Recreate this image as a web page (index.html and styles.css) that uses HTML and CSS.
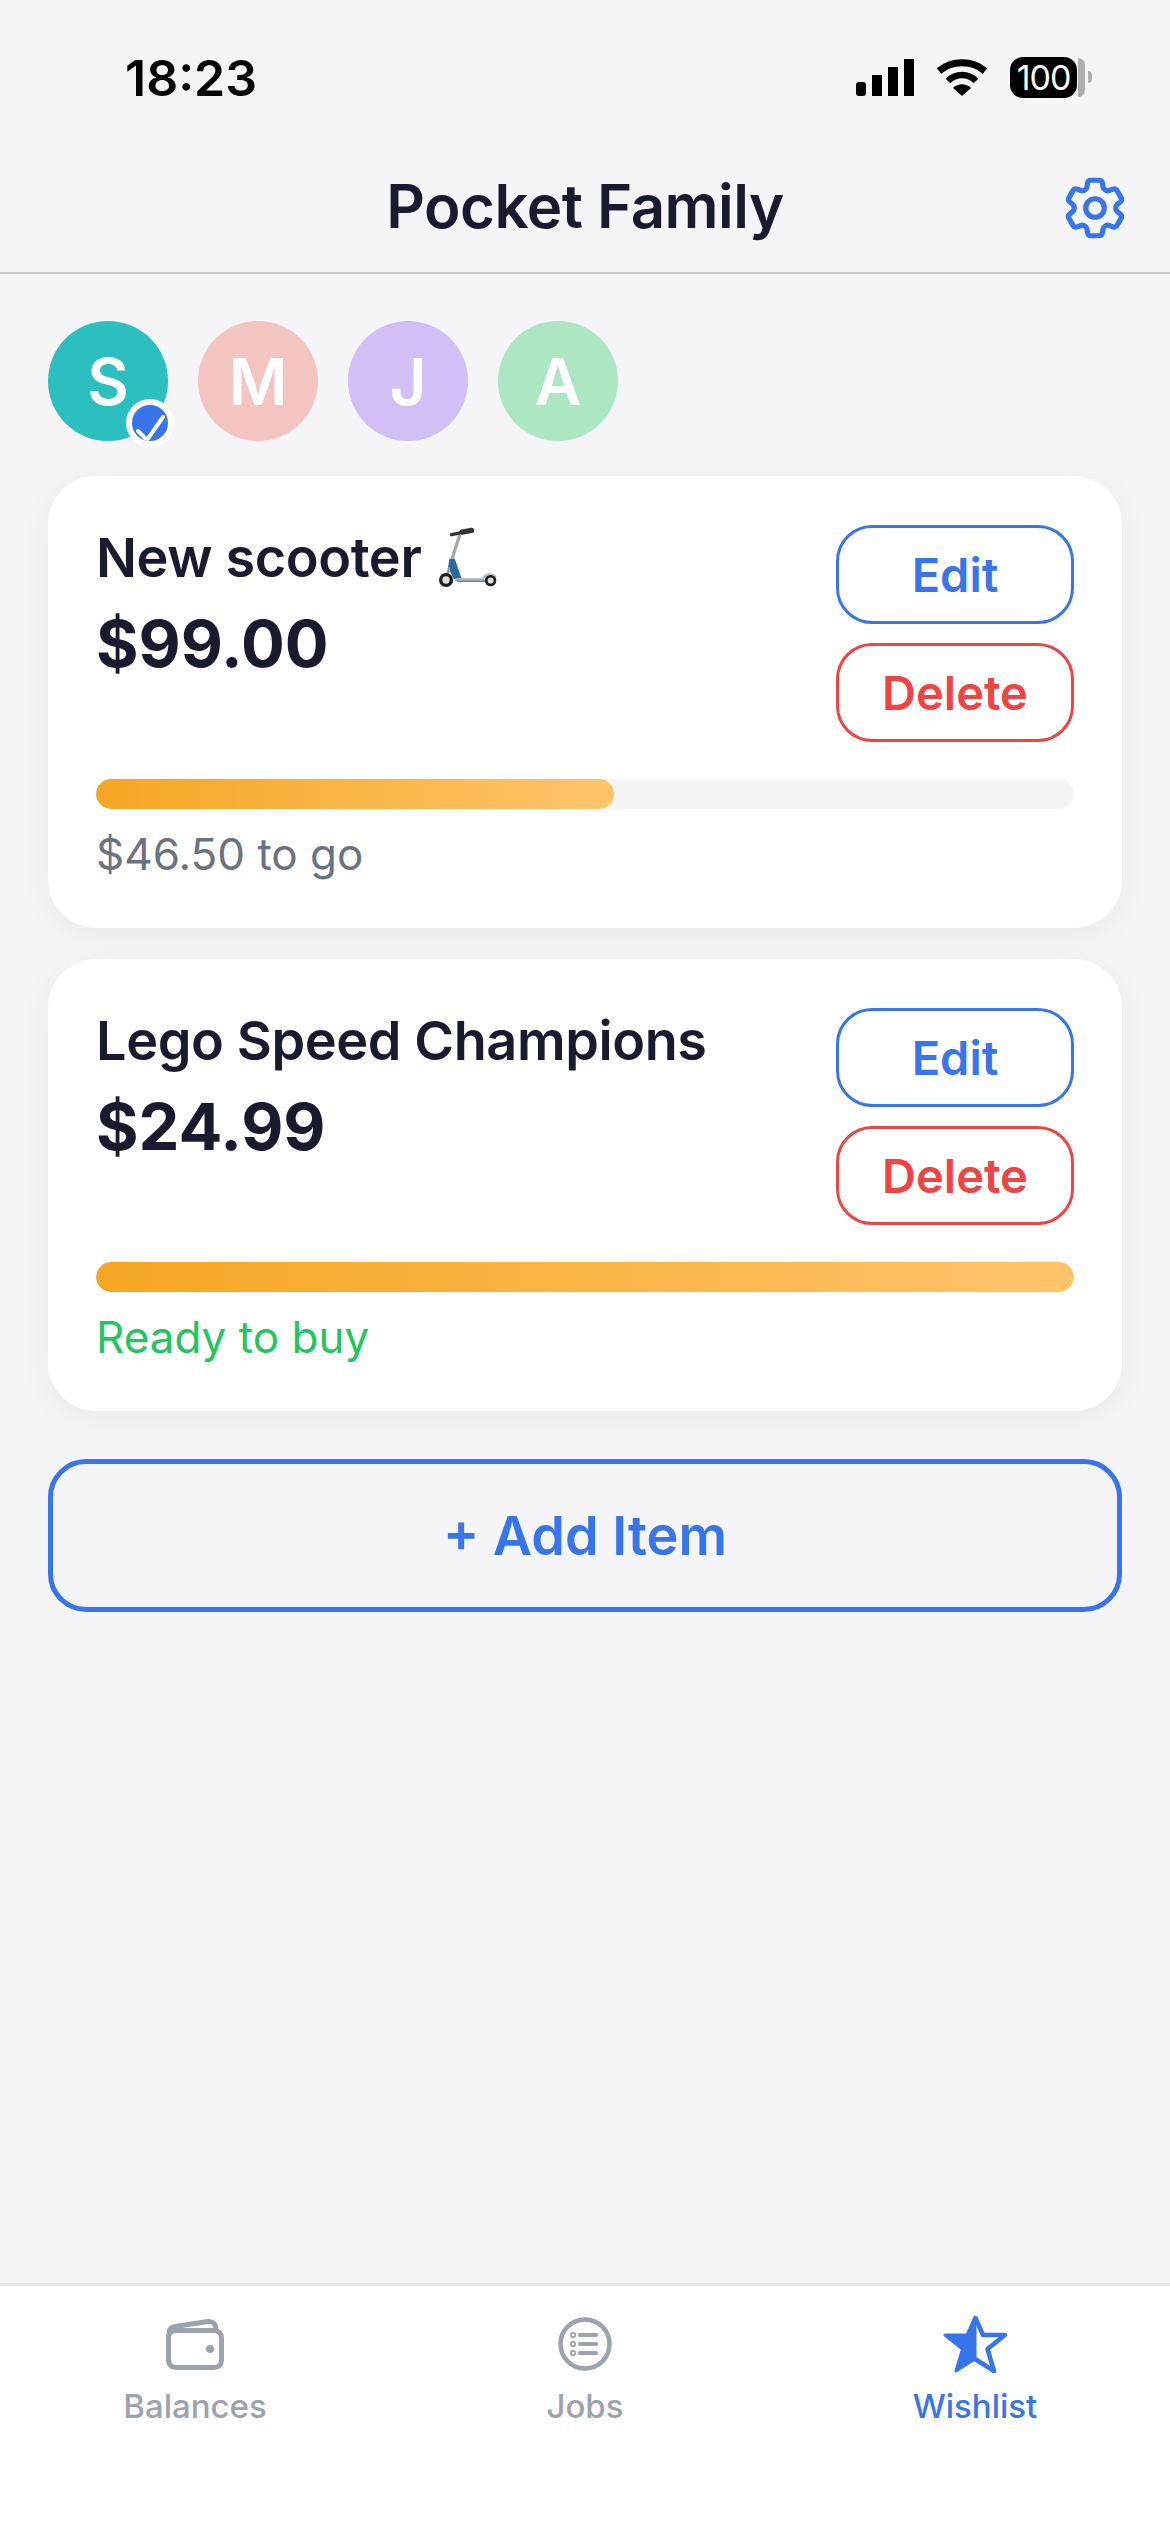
FILE: index.html
```html
<!DOCTYPE html>
<html lang="en">
<head>
    <meta charset="UTF-8">
    <meta name="viewport" content="width=device-width, initial-scale=1.0">
    <title>Pocket Family</title>
    <link rel="stylesheet" href="styles.css">
</head>
<body>
    <div class="app">
        <div class="status-bar">
            <span class="time">18:23</span>
            <div class="status-icons">
                <svg class="signal" width="58" height="37" viewBox="0 0 58 37" fill="#000">
                    <rect x="0" y="23" width="10" height="14" rx="3"/>
                    <rect x="16" y="16" width="10" height="21"/>
                    <rect x="32" y="8" width="10" height="29"/>
                    <rect x="48" y="0" width="10" height="37"/>
                </svg>
                <svg class="wifi" width="52" height="37" viewBox="0 0 52 37">
                    <path d="M26 37 L17 29 C22 24 30 24 35 29 Z" fill="#000"/>
                    <path d="M12 22 C20 14 32 14 40 22" fill="none" stroke="#000" stroke-width="6.5"/>
                    <path d="M3 12 C16 1 36 1 49 12" fill="none" stroke="#000" stroke-width="7"/>
                </svg>
                <div class="battery">
                    <div class="battery-body">100</div>
                    <div class="battery-cap"></div>
                    <div class="battery-nub"></div>
                </div>
            </div>
        </div>

        <header class="top-bar">
            <h1>Pocket Family</h1>
            <svg class="gear" width="74" height="74" viewBox="0 0 24 24" fill="none" stroke="#3874ea" stroke-width="1.7" stroke-linejoin="round">
                <path d="M9.594 3.94c.09-.542.56-.94 1.11-.94h2.593c.55 0 1.02.398 1.11.94l.213 1.281c.063.374.313.686.645.87.074.04.147.083.22.127.325.196.72.257 1.075.124l1.217-.456a1.125 1.125 0 0 1 1.37.49l1.296 2.247a1.125 1.125 0 0 1-.26 1.431l-1.003.827c-.293.241-.438.613-.43.992a7.723 7.723 0 0 1 0 .255c-.008.378.137.75.43.991l1.004.827c.424.35.534.955.26 1.43l-1.298 2.247a1.125 1.125 0 0 1-1.369.491l-1.217-.456c-.355-.133-.75-.072-1.076.124a6.47 6.47 0 0 1-.22.128c-.331.183-.581.495-.644.869l-.213 1.281c-.09.543-.56.94-1.11.94h-2.594c-.55 0-1.019-.398-1.11-.94l-.213-1.281c-.062-.374-.312-.686-.644-.87a6.52 6.52 0 0 1-.22-.127c-.325-.196-.72-.257-1.076-.124l-1.217.456a1.125 1.125 0 0 1-1.369-.49l-1.297-2.247a1.125 1.125 0 0 1 .26-1.431l1.004-.827c.292-.24.437-.613.43-.991a6.932 6.932 0 0 1 0-.255c.007-.38-.138-.751-.43-.992l-1.004-.827a1.125 1.125 0 0 1-.26-1.43l1.297-2.247a1.125 1.125 0 0 1 1.37-.491l1.216.456c.356.133.751.072 1.076-.124.072-.044.146-.086.22-.128.332-.183.582-.495.644-.869l.214-1.28Z"/>
                <path d="M15 12a3 3 0 1 1-6 0 3 3 0 0 1 6 0Z"/>
            </svg>
        </header>

        <main class="content">
            <div class="avatars">
                <div class="avatar teal">S
                    <span class="badge">
                        <svg width="36" height="36" viewBox="0 0 36 36" fill="none" stroke="#fff" stroke-width="4" stroke-linecap="round" stroke-linejoin="round">
                            <path d="M6 26 L15 35 L31 12"/>
                        </svg>
                    </span>
                </div>
                <div class="avatar pink">M</div>
                <div class="avatar purple">J</div>
                <div class="avatar green">A</div>
            </div>

            <div class="card">
                <div class="card-top">
                    <div class="card-info">
                        <div class="item-name">New scooter
                            <svg class="scooter" width="62" height="62" viewBox="115 85 185 185" fill="none">
                                <path d="M183 108 L160 180" stroke="#a8a8a8" stroke-width="10"/>
                                <path d="M158 108 L182 103" stroke="#333" stroke-width="10" stroke-linecap="round"/>
                                <path d="M190 100 L218 95" stroke="#333" stroke-width="16" stroke-linecap="round"/>
                                <path d="M152 180 L168 180 L188 238 L165 240 L148 205 Z" fill="#2a6a9e"/>
                                <path d="M152 205 L142 243" stroke="#999" stroke-width="8"/>
                                <path d="M170 242 L272 242" stroke="#a8b0b8" stroke-width="8"/>
                                <path d="M175 247 L270 247" stroke="#2a6a9e" stroke-width="3"/>
                                <circle cx="142" cy="243" r="16" fill="#ddd" stroke="#1d1d1f" stroke-width="10"/>
                                <path d="M255 238 C258 225 280 222 290 236" stroke="#bbb" stroke-width="8"/>
                                <circle cx="275" cy="245" r="13" fill="#ddd" stroke="#1d1d1f" stroke-width="8"/>
                            </svg>
                        </div>
                        <div class="price">$99.00</div>
                    </div>
                    <div class="card-actions">
                        <button class="btn btn-edit">Edit</button>
                        <button class="btn btn-delete">Delete</button>
                    </div>
                </div>
                <div class="progress"><div class="progress-fill" style="width: 53%"></div></div>
                <p class="note">$46.50 to go</p>
            </div>

            <div class="card">
                <div class="card-top">
                    <div class="card-info">
                        <div class="item-name">Lego Speed Champions</div>
                        <div class="price">$24.99</div>
                    </div>
                    <div class="card-actions">
                        <button class="btn btn-edit">Edit</button>
                        <button class="btn btn-delete">Delete</button>
                    </div>
                </div>
                <div class="progress"><div class="progress-fill" style="width: 100%"></div></div>
                <p class="note note-ready">Ready to buy</p>
            </div>

            <button class="add-item">+ Add Item</button>
        </main>

        <nav class="tab-bar">
            <div class="tab">
                <svg width="60" height="54" viewBox="0 0 60 54" fill="none" stroke="#9ca3af" stroke-width="5">
                    <rect x="3.5" y="13.5" width="53" height="37" rx="7"/>
                    <path d="M4 17 C4 12 6 10 10 9.500 L43 4.500 C48 4 51 7 51 13"/>
                    <circle cx="45" cy="32" r="4" fill="#9ca3af" stroke="none"/>
                </svg>
                <span>Balances</span>
            </div>
            <div class="tab">
                <svg width="60" height="54" viewBox="0 0 60 54" fill="none" stroke="#9ca3af">
                    <circle cx="30" cy="27" r="24.500" stroke-width="4.500"/>
                    <path d="M25 18 H41 M25 27 H41 M25 36 H41" stroke-width="4" stroke-linecap="round"/>
                    <circle cx="18" cy="18" r="2.200" stroke-width="1.800"/>
                    <circle cx="18" cy="27" r="2.200" stroke-width="1.800"/>
                    <circle cx="18" cy="36" r="2.200" stroke-width="1.800"/>
                </svg>
                <span>Jobs</span>
            </div>
            <div class="tab active">
                <svg width="64" height="60" viewBox="0 0 64 60">
                    <path d="M32 3 L32 45 L13 57 L19.500 35 L2 21 L24 21 Z" fill="#3874ea" stroke="#3874ea" stroke-width="3" stroke-linejoin="round"/>
                    <path d="M32 3 L40 21 L62 21 L44.500 35 L51 57 L32 45" fill="none" stroke="#3874ea" stroke-width="4.500" stroke-linejoin="round"/>
                </svg>
                <span>Wishlist</span>
            </div>
        </nav>
    </div>
</body>
</html>
```

FILE: styles.css
```css
* {
    box-sizing: border-box;
}
body {
    font-family: Inter, "Liberation Sans", sans-serif;
    background-color: #f5f5f8;
    color: #1a1a2e;
    margin: 0;
}
.app {
    height: 2532px;
    display: flex;
    flex-direction: column;
}

/* status bar */
.status-bar {
    height: 100px;
    padding: 56px 78px 0 125px;
    display: flex;
    justify-content: space-between;
    align-items: flex-start;
}
.time {
    font-size: 50px;
    line-height: 44px;
    font-weight: 600;
    color: #000;
}
.status-icons {
    display: flex;
    align-items: center;
    gap: 22px;
    height: 42px;
}
.battery {
    display: flex;
    align-items: center;
}
.battery-body {
    width: 67px;
    height: 41px;
    border-radius: 13px;
    background-color: #000;
    color: #fff;
    font-size: 34px;
    line-height: 41px;
    text-align: center;
    letter-spacing: -1px;
}
.battery-cap {
    width: 7px;
    height: 39px;
    margin-left: 1px;
    border-radius: 0 10px 10px 0;
    background-color: #aeaeae;
}
.battery-nub {
    width: 4px;
    height: 12px;
    margin-left: 3px;
    border-radius: 0 4px 4px 0;
    background-color: #aeaeae;
}

/* header */
.top-bar {
    position: relative;
    height: 174px;
    padding-top: 40px;
    border-bottom: 2px solid #c8c8cc;
    display: flex;
    align-items: center;
    justify-content: center;
}
h1 {
    margin: 0;
    font-size: 60px;
    font-weight: 600;
    letter-spacing: -0.5px;
}
.gear {
    position: absolute;
    right: 38px;
    top: 71px;
}

/* main */
.content {
    flex: 1;
    padding: 47px 48px 0;
}
.avatars {
    display: flex;
    gap: 30px;
    margin-bottom: 35px;
}
.avatar {
    position: relative;
    width: 120px;
    height: 120px;
    border-radius: 50%;
    display: flex;
    align-items: center;
    justify-content: center;
    color: #fff;
    font-size: 64px;
    font-weight: 600;
}
.teal { background-color: #2bbfbf; }
.pink { background-color: #f4c4c0; }
.purple { background-color: #d1bff5; }
.green { background-color: #ace6c3; }
.badge {
    position: absolute;
    right: -6px;
    bottom: -6px;
    width: 48px;
    height: 48px;
    border-radius: 50%;
    background-color: #3874ea;
    border: 6px solid #fff;
    overflow: hidden;
}
.badge svg {
    display: block;
}

.card {
    background-color: #fff;
    border-radius: 48px;
    padding: 49px 48px 48px;
    margin-bottom: 31px;
    box-shadow: 0 6px 30px rgba(0, 0, 0, 0.05);
}
.card-top {
    display: flex;
    justify-content: space-between;
    align-items: flex-start;
    margin-bottom: 37px;
}
.item-name {
    font-size: 54px;
    font-weight: 600;
    line-height: 66px;
    letter-spacing: -0.4px;
    display: flex;
    align-items: center;
    gap: 16px;
}
.price {
    font-size: 65px;
    font-weight: 700;
    line-height: 84px;
    margin-top: 11px;
}
.card-actions {
    display: flex;
    flex-direction: column;
    gap: 19px;
}
.btn {
    width: 238px;
    height: 99px;
    border-radius: 36px;
    background-color: #fff;
    font-family: inherit;
    font-size: 47px;
    font-weight: 600;
}
.btn-edit {
    border: 3px solid #3874ea;
    color: #3874ea;
}
.btn-delete {
    border: 3px solid #ef4444;
    color: #ef4444;
}
.progress {
    height: 30px;
    border-radius: 15px;
    background-color: #f5f5f8;
    overflow: hidden;
}
.progress-fill {
    height: 100%;
    border-radius: 15px;
    background: linear-gradient(90deg, #f5a623, #ffc46b);
}
.note {
    margin: 19px 0 0;
    font-size: 44px;
    line-height: 52px;
    color: #6b7280;
}
.note-ready {
    color: #22c55e;
}
.add-item {
    width: 100%;
    height: 153px;
    margin-top: 17px;
    border: 5px solid #3874ea;
    border-radius: 38px;
    background: none;
    color: #3874ea;
    font-family: inherit;
    font-size: 54px;
    font-weight: 600;
}

/* tabs */
.tab-bar {
    height: 249px;
    background-color: #fff;
    border-top: 3px solid #e5e5ea;
    display: grid;
    grid-template-columns: repeat(3, 1fr);
    padding-top: 28px;
}
.tab {
    display: flex;
    flex-direction: column;
    align-items: center;
    color: #9ca3af;
    font-size: 33px;
    font-weight: 500;
}
.tab svg {
    height: 60px;
}
.tab span {
    margin-top: 12px;
    line-height: 40px;
}
.tab.active {
    color: #3874ea;
}
```
